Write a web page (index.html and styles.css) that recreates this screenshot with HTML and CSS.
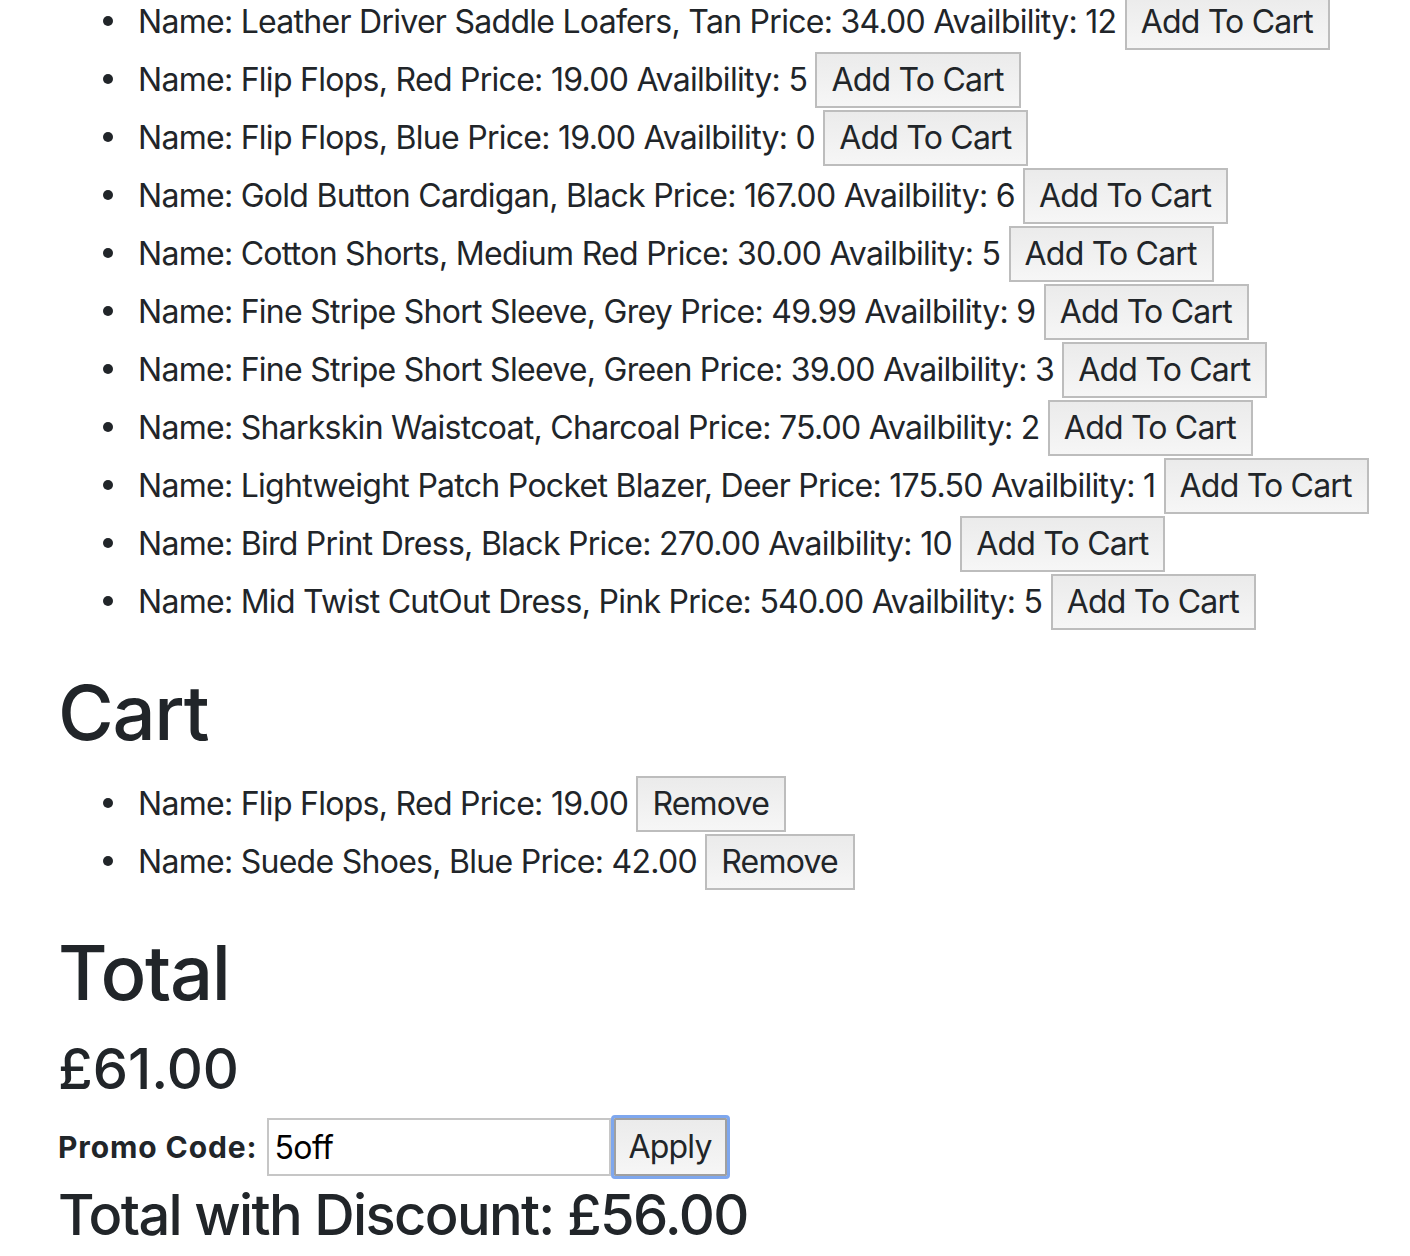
FILE: index.html
```html
<!DOCTYPE html>
<html>
<head>
<meta charset="utf-8">
<link rel="stylesheet" href="styles.css">
</head>
<body>
<div class="page">
  <ul class="list products">
    <li>Name: Leather Driver Saddle Loafers, Tan Price: 34.00 Availbility: 12 <button class="btn">Add To Cart</button></li>
    <li>Name: Flip Flops, Red Price: 19.00 Availbility: 5 <button class="btn">Add To Cart</button></li>
    <li>Name: Flip Flops, Blue Price: 19.00 Availbility: 0 <button class="btn">Add To Cart</button></li>
    <li>Name: Gold Button Cardigan, Black Price: 167.00 Availbility: 6 <button class="btn">Add To Cart</button></li>
    <li>Name: Cotton Shorts, Medium Red Price: 30.00 Availbility: 5 <button class="btn">Add To Cart</button></li>
    <li>Name: Fine Stripe Short Sleeve, Grey Price: 49.99 Availbility: 9 <button class="btn">Add To Cart</button></li>
    <li>Name: Fine Stripe Short Sleeve, Green Price: 39.00 Availbility: 3 <button class="btn">Add To Cart</button></li>
    <li>Name: Sharkskin Waistcoat, Charcoal Price: 75.00 Availbility: 2 <button class="btn">Add To Cart</button></li>
    <li>Name: Lightweight Patch Pocket Blazer, Deer Price: 175.50 Availbility: 1 <button class="btn">Add To Cart</button></li>
    <li>Name: Bird Print Dress, Black Price: 270.00 Availbility: 10 <button class="btn">Add To Cart</button></li>
    <li>Name: Mid Twist CutOut Dress, Pink Price: 540.00 Availbility: 5 <button class="btn">Add To Cart</button></li>
  </ul>
  <h1 class="h1">Cart</h1>
  <ul class="list">
    <li>Name: Flip Flops, Red Price: 19.00 <button class="btn">Remove</button></li>
    <li>Name: Suede Shoes, Blue Price: 42.00 <button class="btn">Remove</button></li>
  </ul>
  <h1 class="h1">Total</h1>
  <h3 class="h3">£61.00</h3>
  <form class="promo">
    <label class="promo-label">Promo Code:</label>
    <input class="promo-input" type="text" value="5off">
    <button type="button" class="btn btn-focus">Apply</button>
  </form>
  <h3 class="h3 discount">Total with Discount: £56.00</h3>
</div>
</body>
</html>
```
FILE: styles.css
```css
html, body {
  margin: 0;
  padding: 0;
  background: #ffffff;
}
body {
  font-family: Inter, "Noto Sans", "Liberation Sans", sans-serif;
  font-size: 32px;
  line-height: 48px;
  color: #212529;
  overflow: hidden;
}
.page {
  padding-left: 58px;
}
.list {
  margin: 0 0 32px 0;
  padding-left: 80px;
  list-style: none;
  letter-spacing: -0.72px;
}
.products {
  margin-top: -6px;
}
.list li {
  line-height: 48px;
  height: 58px;
  white-space: nowrap;
}
.list li::before {
  content: "";
  display: inline-block;
  width: 10px;
  height: 10px;
  border-radius: 50%;
  background: #212529;
  margin-left: -35px;
  margin-right: 25px;
  vertical-align: 7px;
}
.btn {
  font-family: inherit;
  font-size: 32px;
  line-height: 48px;
  letter-spacing: -0.8px;
  color: #212529;
  padding: 2px 15px 2px 14px;
  margin: 0;
  border: 2px solid #bdbdbd;
  border-radius: 0;
  background: linear-gradient(#ebebeb, #f6f6f6);
}
.h1 {
  font-size: 76px;
  font-weight: 500;
  line-height: 96px;
  letter-spacing: -1.3px;
  margin: 0 0 16px 0;
}
.h3 {
  font-size: 56px;
  font-weight: 500;
  line-height: 67px;
  margin: 0 0 15px 0;
}
.discount {
  margin: 6px 0 0 0;
  letter-spacing: -1.65px;
}
.promo {
  display: flex;
  align-items: center;
  height: 58px;
  margin: 0;
}
.promo-label {
  font-size: 30px;
  font-weight: 700;
  letter-spacing: 0.9px;
  margin-right: 9px;
  color: #212529;
}
.promo-input {
  width: 344px;
  height: 58px;
  box-sizing: border-box;
  border: 2px solid #c6c6c6;
  padding: 0 6px;
  font-family: inherit;
  font-size: 32px;
  letter-spacing: -0.6px;
  color: #000;
  margin: 0;
  outline: none;
}
.btn-focus {
  height: 58px;
  box-sizing: border-box;
  margin-left: 3px;
  padding: 0 13px;
  border-color: #a0a0a0;
  outline: 3px solid #7ea7ee;
  outline-offset: 0;
  border-radius: 1px;
}
```
